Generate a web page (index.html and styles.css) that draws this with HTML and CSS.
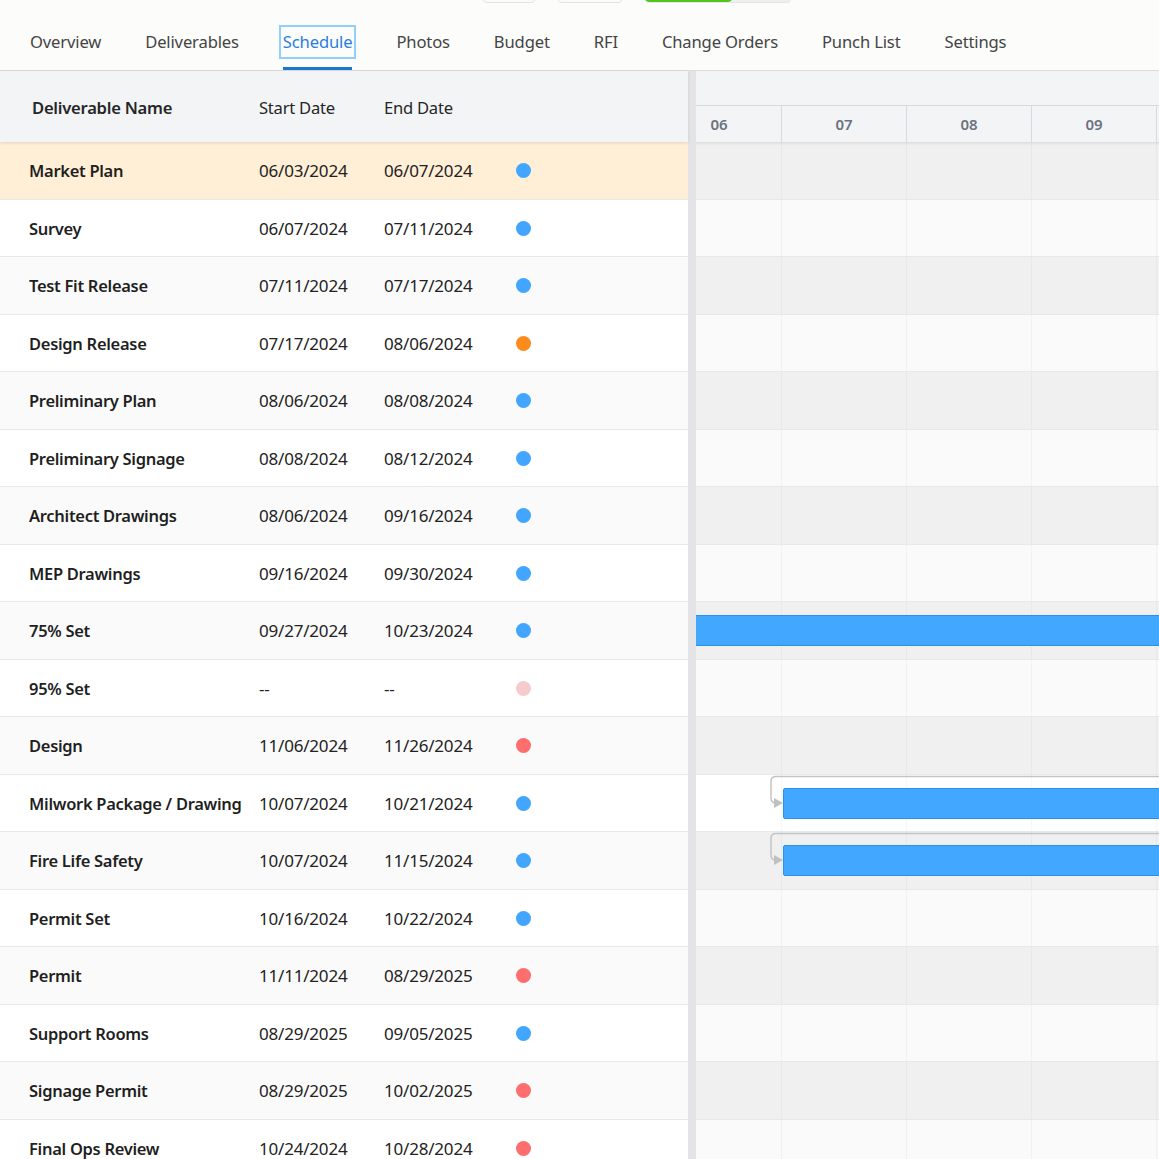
FILE: index.html
```html
<!DOCTYPE html>
<html>
<head>
<meta charset="utf-8">
<link rel="stylesheet" href="styles.css">
</head>
<body>
<div class="page">
  <div class="topstrip">
    <span class="tbtn b1"></span>
    <span class="tbtn b2"></span>
    <span class="progress"><span class="progress-fill"></span></span>
  </div>
  <nav class="tabs">
    <a class="tab">Overview</a>
    <a class="tab">Deliverables</a>
    <a class="tab active">Schedule</a>
    <a class="tab">Photos</a>
    <a class="tab">Budget</a>
    <a class="tab">RFI</a>
    <a class="tab">Change Orders</a>
    <a class="tab">Punch List</a>
    <a class="tab">Settings</a>
  </nav>
  <div class="schedule">
    <div class="grid-left">
      <div class="thead">
        <div class="th name">Deliverable Name</div>
        <div class="th start">Start Date</div>
        <div class="th end">End Date</div>
      </div>
      <div class="tbody" id="rows"></div>
    </div>
    <div class="splitter"></div>
    <div class="gantt">
      <div class="gantt-inner">
        <div class="ghead">
          <div class="ghead-top"></div>
          <div class="months">
            <div class="month">06</div>
            <div class="month">07</div>
            <div class="month">08</div>
            <div class="month">09</div>
            <div class="month"></div>
          </div>
        </div>
        <div class="gbody" id="grows"></div>
      </div>
    </div>
  </div>
</div>
<script src="app.js"></script>
</body>
</html>
```
FILE: styles.css
```css
* { box-sizing: border-box; }
html, body { margin: 0; padding: 0; }
body {
  background: #fcfcfb;
  font-family: "Noto Sans", "Open Sans", sans-serif;
  color: #222;
  overflow: hidden;
}
.page { width: 1159px; height: 1159px; overflow: hidden; }

.topstrip {
  height: 0;
  position: relative;
}
.tbtn, .progress {
  position: absolute;
  top: -20px;
  height: 23px;
}
.tbtn {
  border: 1px solid #e3e3e3;
  border-radius: 5px;
  background: #fbfbfb;
}
.b1 { left: 482px; width: 54px; }
.b2 { left: 557px; width: 66px; }
.progress {
  left: 645px;
  width: 146px;
  border-radius: 4px;
  background: #efefef;
  overflow: hidden;
  border-bottom: 1px solid #e6e6e6;
}
.progress-fill {
  display: block;
  width: 87px;
  height: 100%;
  background: #52c41a;
  border-radius: 4px;
}

.tabs {
  height: 71px;
  display: flex;
  align-items: center;
  gap: 44px;
  padding: 13px 0 0 30px;
  border-bottom: 1px solid #dcdcdc;
  background: #fcfcfb;
}
.tab {
  position: relative;
  font-size: 16.6px;
  color: #444;
  line-height: 26px;
  letter-spacing: -0.15px;
  white-space: nowrap;
}
.tab.active {
  color: #2b7de0;
  outline: 2px solid #91cffc;
  outline-offset: 2px;
}
.tab.active::after {
  content: "";
  position: absolute;
  left: 0;
  right: 0;
  bottom: -15px;
  height: 3px;
  background: #1976d2;
}

.schedule {
  display: flex;
  height: 1100px;
}
.grid-left {
  width: 688px;
  flex: none;
  background: #fff;
}
.thead {
  height: 71px;
  display: flex;
  align-items: center;
  padding-top: 1px;
  background: #f3f4f6;
  box-shadow: 0 1px 3px rgba(0,0,0,0.12);
  position: relative;
  z-index: 1;
  font-size: 16.6px;
  color: #262626;
  letter-spacing: -0.25px;
}
.th.name { width: 259px; padding-left: 32px; font-weight: 600; }
.th.start { width: 125px; }
.th.end { width: 125px; }

.row {
  height: 57.5px;
  display: flex;
  align-items: center;
  padding-top: 1px;
  border-bottom: 1px solid #e8e8e8;
  font-size: 17px;
  letter-spacing: -0.2px;
  color: #222;
}
.row:nth-child(odd) { background: #fafafa; }
.row:nth-child(even) { background: #fff; }
.row.selected { background: #ffefd6; }
.cell-name {
  width: 212px;
  margin-left: 29px;
  margin-right: 18px;
  font-size: 16.5px;
  letter-spacing: -0.3px;
  font-weight: 600;
  white-space: nowrap;
  overflow: hidden;
  color: #1f1f1f;
}
.cell-date { width: 125px; white-space: nowrap; }
.cell-status { width: 100px; padding-left: 7px; }
.dot {
  display: block;
  width: 15px;
  height: 15px;
  border-radius: 50%;
}
.dot.blue { background: #42a5ff; }
.dot.orange { background: #fb8b1b; }
.dot.pink { background: #f6cbcd; }
.dot.red { background: #ff6e6e; }

.splitter {
  width: 8px;
  flex: none;
  background: #e4e4e7;
}
.gantt {
  flex: 1;
  overflow: hidden;
  background: #fafafa;
}
.gantt-inner {
  margin-left: -39px;
  width: 700px;
}
.ghead {
  height: 71px;
  background: #f3f4f6;
  box-shadow: 0 1px 3px rgba(0,0,0,0.12);
  position: relative;
  z-index: 1;
  display: flex;
  flex-direction: column;
}
.ghead-top { height: 34px; }
.months {
  flex: 1;
  display: flex;
  border-top: 1px solid #d9dadd;
}
.month {
  width: 125px;
  flex: none;
  border-right: 1px solid #d9dadd;
  display: flex;
  align-items: center;
  justify-content: center;
  font-size: 15px;
  font-weight: 600;
  color: #6b7280;
}
.grow {
  height: 57.5px;
  position: relative;
  border-bottom: 1px solid #e8e8e8;
  background-image: linear-gradient(to right, transparent 124px, rgba(0,0,0,0.03) 124px);
  background-size: 125px 100%;
}
.grow:nth-child(odd) { background-color: #f0f0f0; }
.grow:nth-child(even) { background-color: #fafafa; }
.grow.white { background-color: #fff; }
.bar {
  position: absolute;
  top: 13px;
  height: 31px;
  background: #42a7ff;
  border: 1px solid #2a91ef;
  border-radius: 2px;
}
.link {
  position: absolute;
  left: 0;
  top: 0;
  overflow: visible;
}
```
FILE: app.js
```js
var data = [
  ["Market Plan","06/03/2024","06/07/2024","blue"],
  ["Survey","06/07/2024","07/11/2024","blue"],
  ["Test Fit Release","07/11/2024","07/17/2024","blue"],
  ["Design Release","07/17/2024","08/06/2024","orange"],
  ["Preliminary Plan","08/06/2024","08/08/2024","blue"],
  ["Preliminary Signage","08/08/2024","08/12/2024","blue"],
  ["Architect Drawings","08/06/2024","09/16/2024","blue"],
  ["MEP Drawings","09/16/2024","09/30/2024","blue"],
  ["75% Set","09/27/2024","10/23/2024","blue"],
  ["95% Set","--","--","pink"],
  ["Design","11/06/2024","11/26/2024","red"],
  ["Milwork Package / Drawings","10/07/2024","10/21/2024","blue"],
  ["Fire Life Safety","10/07/2024","11/15/2024","blue"],
  ["Permit Set","10/16/2024","10/22/2024","blue"],
  ["Permit","11/11/2024","08/29/2025","red"],
  ["Support Rooms","08/29/2025","09/05/2025","blue"],
  ["Signage Permit","08/29/2025","10/02/2025","red"],
  ["Final Ops Review","10/24/2024","10/28/2024","red"]
];
var rows = document.getElementById("rows");
var grows = document.getElementById("grows");
data.forEach(function (d, i) {
  var r = document.createElement("div");
  r.className = "row" + (i === 0 ? " selected" : "");
  r.innerHTML = '<div class="cell-name">' + d[0] + '</div>' +
    '<div class="cell-date">' + d[1] + '</div>' +
    '<div class="cell-date">' + d[2] + '</div>' +
    '<div class="cell-status"><span class="dot ' + d[3] + '"></span></div>';
  rows.appendChild(r);

  var g = document.createElement("div");
  g.className = "grow" + (i === 11 ? " white" : "");
  if (i === 8) {
    g.innerHTML = '<div class="bar" style="left:30px;width:700px;top:13px"></div>';
  }
  if (i === 11 || i === 12) {
    g.innerHTML =
      '<svg class="link" width="700" height="58">' +
      '<path d="M700 1.5 H119 Q114 1.5 114 6.5 V23 Q114 28 119 28 H122" fill="none" stroke="#c4c4c4" stroke-width="1.5"/>' +
      '<polygon points="117,23 126,28 117,33" fill="#c0c0c0"/>' +
      '</svg>' +
      '<div class="bar" style="left:126px;width:620px;top:13px"></div>';
  }
  grows.appendChild(g);
});
```
